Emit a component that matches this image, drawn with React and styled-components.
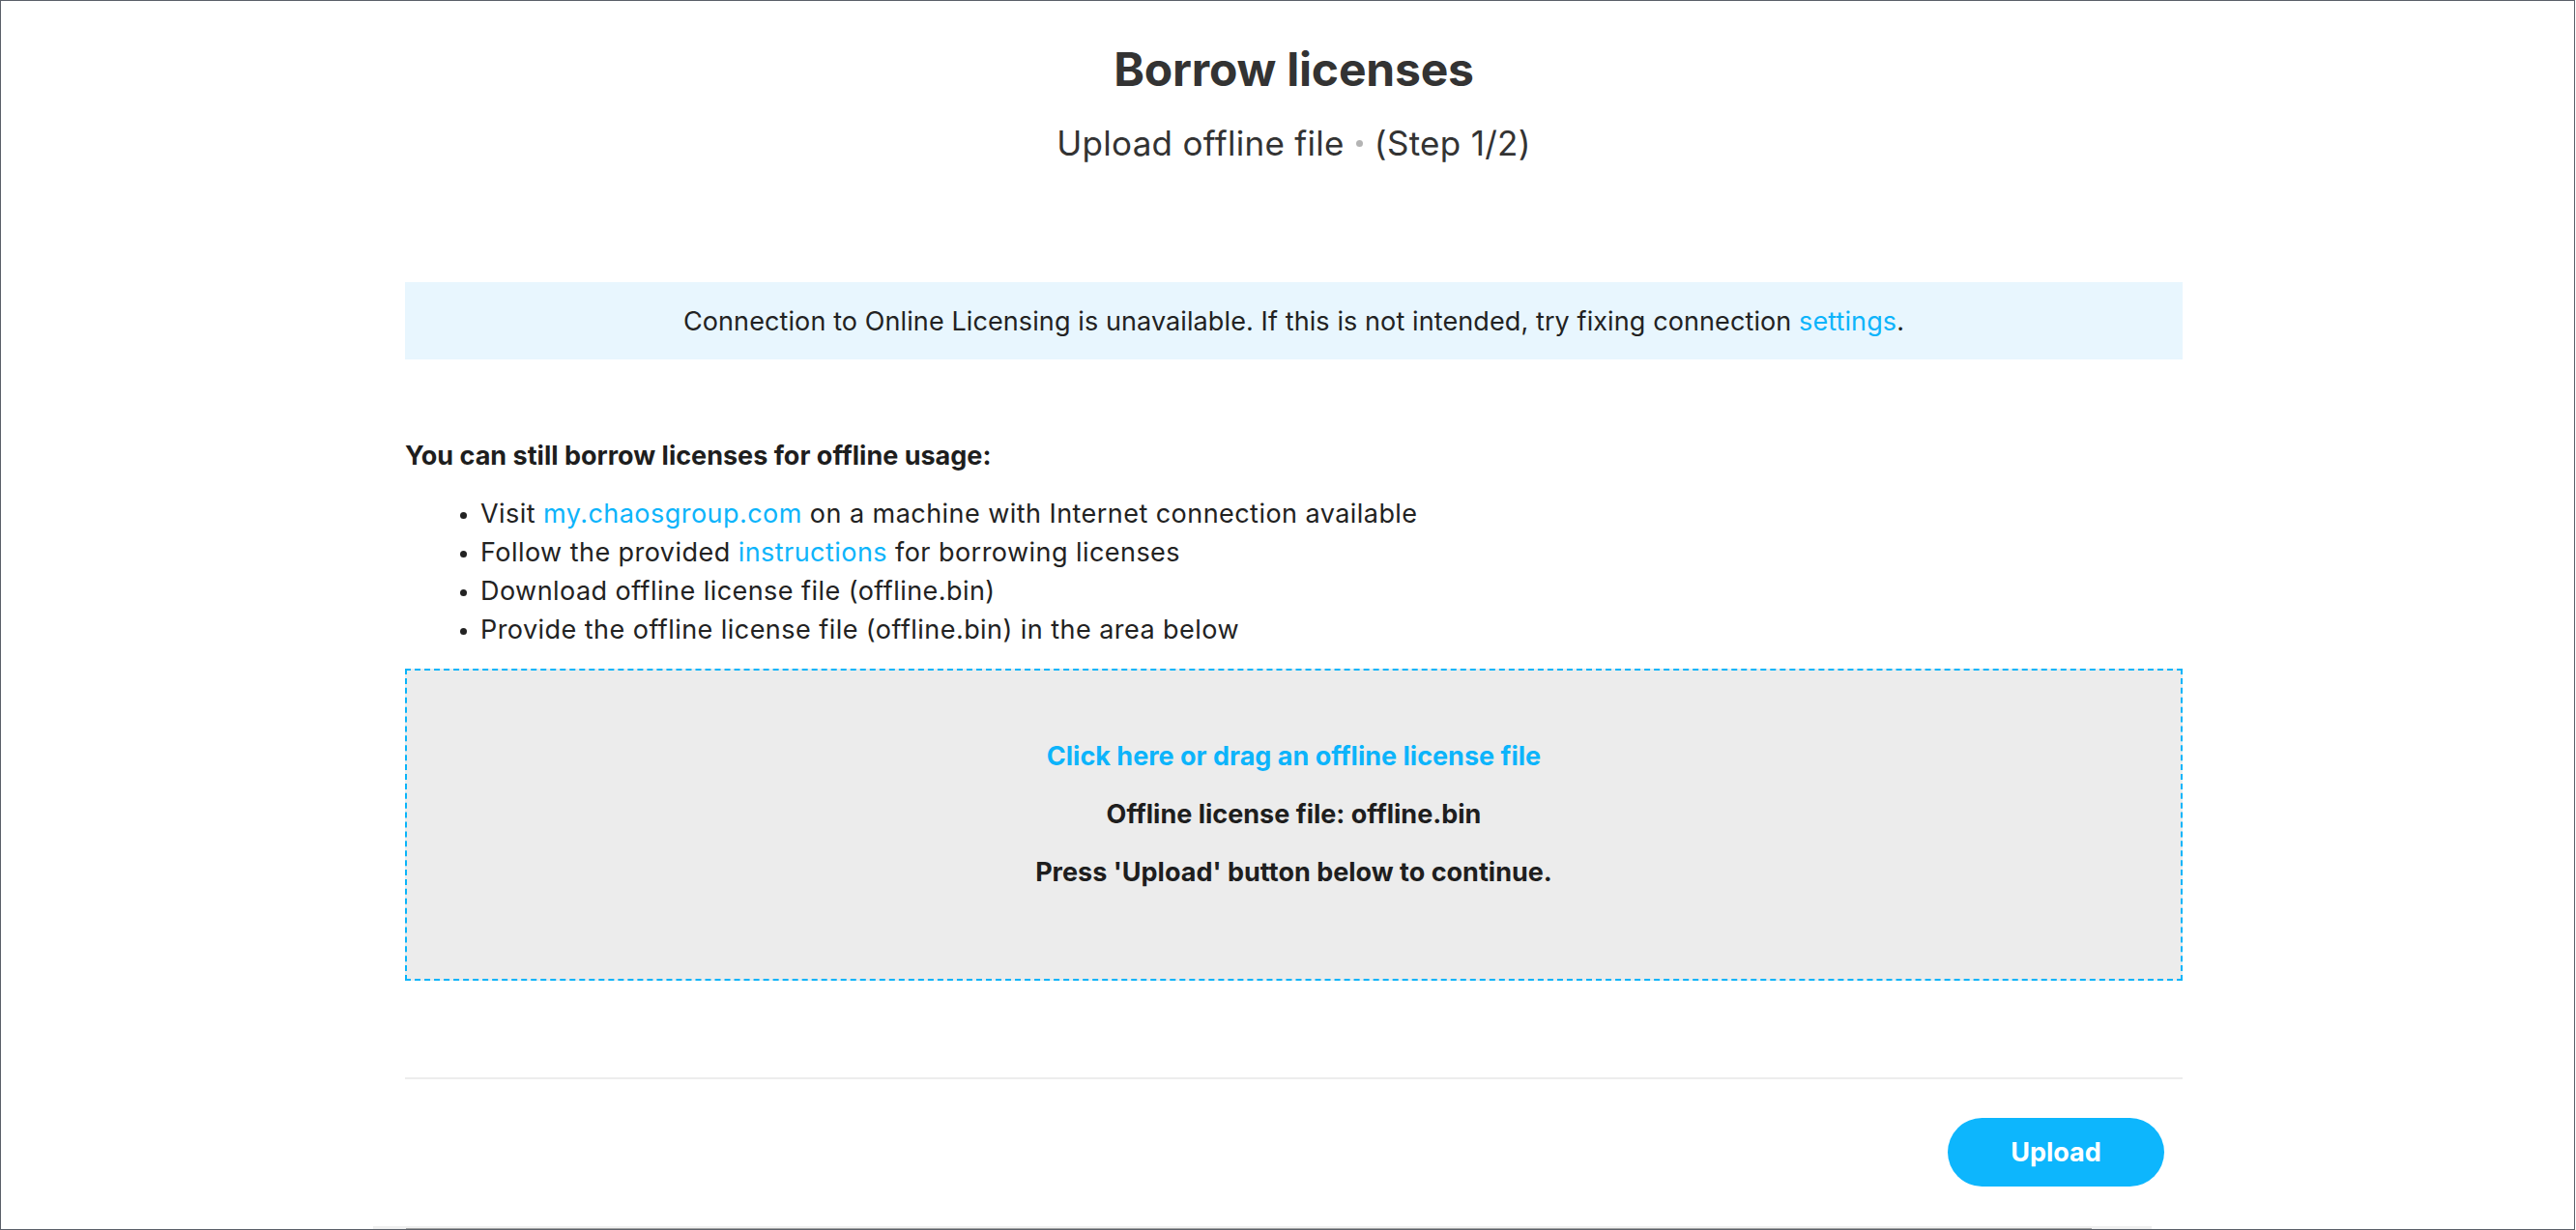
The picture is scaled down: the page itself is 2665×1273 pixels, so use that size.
import React from 'react';
import styled, { createGlobalStyle } from 'styled-components';

const GlobalStyle = createGlobalStyle`
  html, body {
    margin: 0;
    padding: 0;
    background: #fff;
  }
  body {
    font-family: Inter, "Noto Sans", "DejaVu Sans", sans-serif;
    color: #222;
  }
`;

const Frame = styled.div`
  position: relative;
  box-sizing: border-box;
  width: 2664px;
  height: 1273px;
  border: 1px solid #5b6069;
  padding: 42px 0 0 13px;
  overflow: hidden;
`;

const Container = styled.div`
  width: 1839px;
  margin: 0 auto;
  display: flex;
  flex-direction: column;
`;

const Title = styled.h1`
  margin: 0;
  font-size: 48px;
  line-height: 58px;
  font-weight: 700;
  color: #333;
  text-align: center;
  letter-spacing: -0.2px;
`;

const Subtitle = styled.div`
  margin-top: 25px;
  display: flex;
  align-items: center;
  justify-content: center;
  gap: 12px;
  font-size: 35px;
  line-height: 44px;
  font-weight: 400;
  letter-spacing: 0.3px;
  color: #333;
`;

const Dot = styled.span`
  width: 7px;
  height: 7px;
  border-radius: 50%;
  background: #b4b4b4;
`;

const Banner = styled.div`
  margin-top: 122px;
  height: 80px;
  display: flex;
  align-items: center;
  justify-content: center;
  background: #e8f6fe;
  font-size: 27px;
  letter-spacing: 0.1px;
  color: #222;
`;

const Link = styled.a`
  color: #0cb4fb;
  text-decoration: none;
  cursor: pointer;
`;

const Heading = styled.div`
  margin-top: 80px;
  font-size: 27px;
  line-height: 40px;
  font-weight: 700;
  color: #1e1e1e;
`;

const Steps = styled.ul`
  margin: 20px 0 0;
  padding: 0 0 0 78px;
  font-size: 27px;
  line-height: 40px;
  letter-spacing: 0.45px;
  color: #222;

  li::marker {
    font-size: 22px;
  }
`;

const DropZone = styled.div`
  box-sizing: border-box;
  margin-top: 20px;
  height: 323px;
  padding-top: 69px;
  display: flex;
  flex-direction: column;
  align-items: center;
  gap: 20px;
  background: #ececec;
  border: 2px dashed #0ab4f9;
  cursor: pointer;
`;

const DropLine = styled.div`
  font-size: 27px;
  line-height: 40px;
  font-weight: 700;
  color: ${(p) => (p.$accent ? '#0cb4fb' : '#1e1e1e')};
`;

const Divider = styled.hr`
  margin: 100px 0 0;
  border: none;
  height: 2px;
  background: #ededed;
`;

const Footer = styled.div`
  margin-top: 40px;
  display: flex;
  justify-content: flex-end;
  padding-right: 19px;
`;

const UploadButton = styled.button`
  width: 224px;
  height: 71px;
  border: none;
  border-radius: 36px;
  background: #0db6fd;
  color: #fff;
  font-family: inherit;
  font-size: 27px;
  font-weight: 700;
  cursor: pointer;
`;

// cut-off horizontal scrollbar along the bottom edge
const ScrollTrack = styled.div`
  position: absolute;
  left: 385px;
  bottom: 0;
  width: 1840px;
  height: 3px;
  background: #f0f0f0;
`;

const ScrollThumb = styled.div`
  position: absolute;
  left: 34px;
  bottom: 0;
  width: 1744px;
  height: 1px;
  background: #a3a3a3;
`;

const App = () => {
  return (
    <>
      <GlobalStyle />
      <Frame>
        <Container>
          <Title>Borrow licenses</Title>
          <Subtitle>
            <span>Upload offline file</span>
            <Dot />
            <span>(Step 1/2)</span>
          </Subtitle>

          <Banner>
            <span>
              Connection to Online Licensing is unavailable. If this is not intended, try fixing
              connection <Link>settings</Link>.
            </span>
          </Banner>

          <Heading>You can still borrow licenses for offline usage:</Heading>
          <Steps>
            <li>
              Visit <Link>my.chaosgroup.com</Link> on a machine with Internet connection available
            </li>
            <li>
              Follow the provided <Link>instructions</Link> for borrowing licenses
            </li>
            <li>Download offline license file (offline.bin)</li>
            <li>Provide the offline license file (offline.bin) in the area below</li>
          </Steps>

          <DropZone>
            <DropLine $accent>Click here or drag an offline license file</DropLine>
            <DropLine>Offline license file: offline.bin</DropLine>
            <DropLine>Press 'Upload' button below to continue.</DropLine>
          </DropZone>

          <Divider />
          <Footer>
            <UploadButton>Upload</UploadButton>
          </Footer>
        </Container>
        <ScrollTrack>
          <ScrollThumb />
        </ScrollTrack>
      </Frame>
    </>
  );
};

export default App;
